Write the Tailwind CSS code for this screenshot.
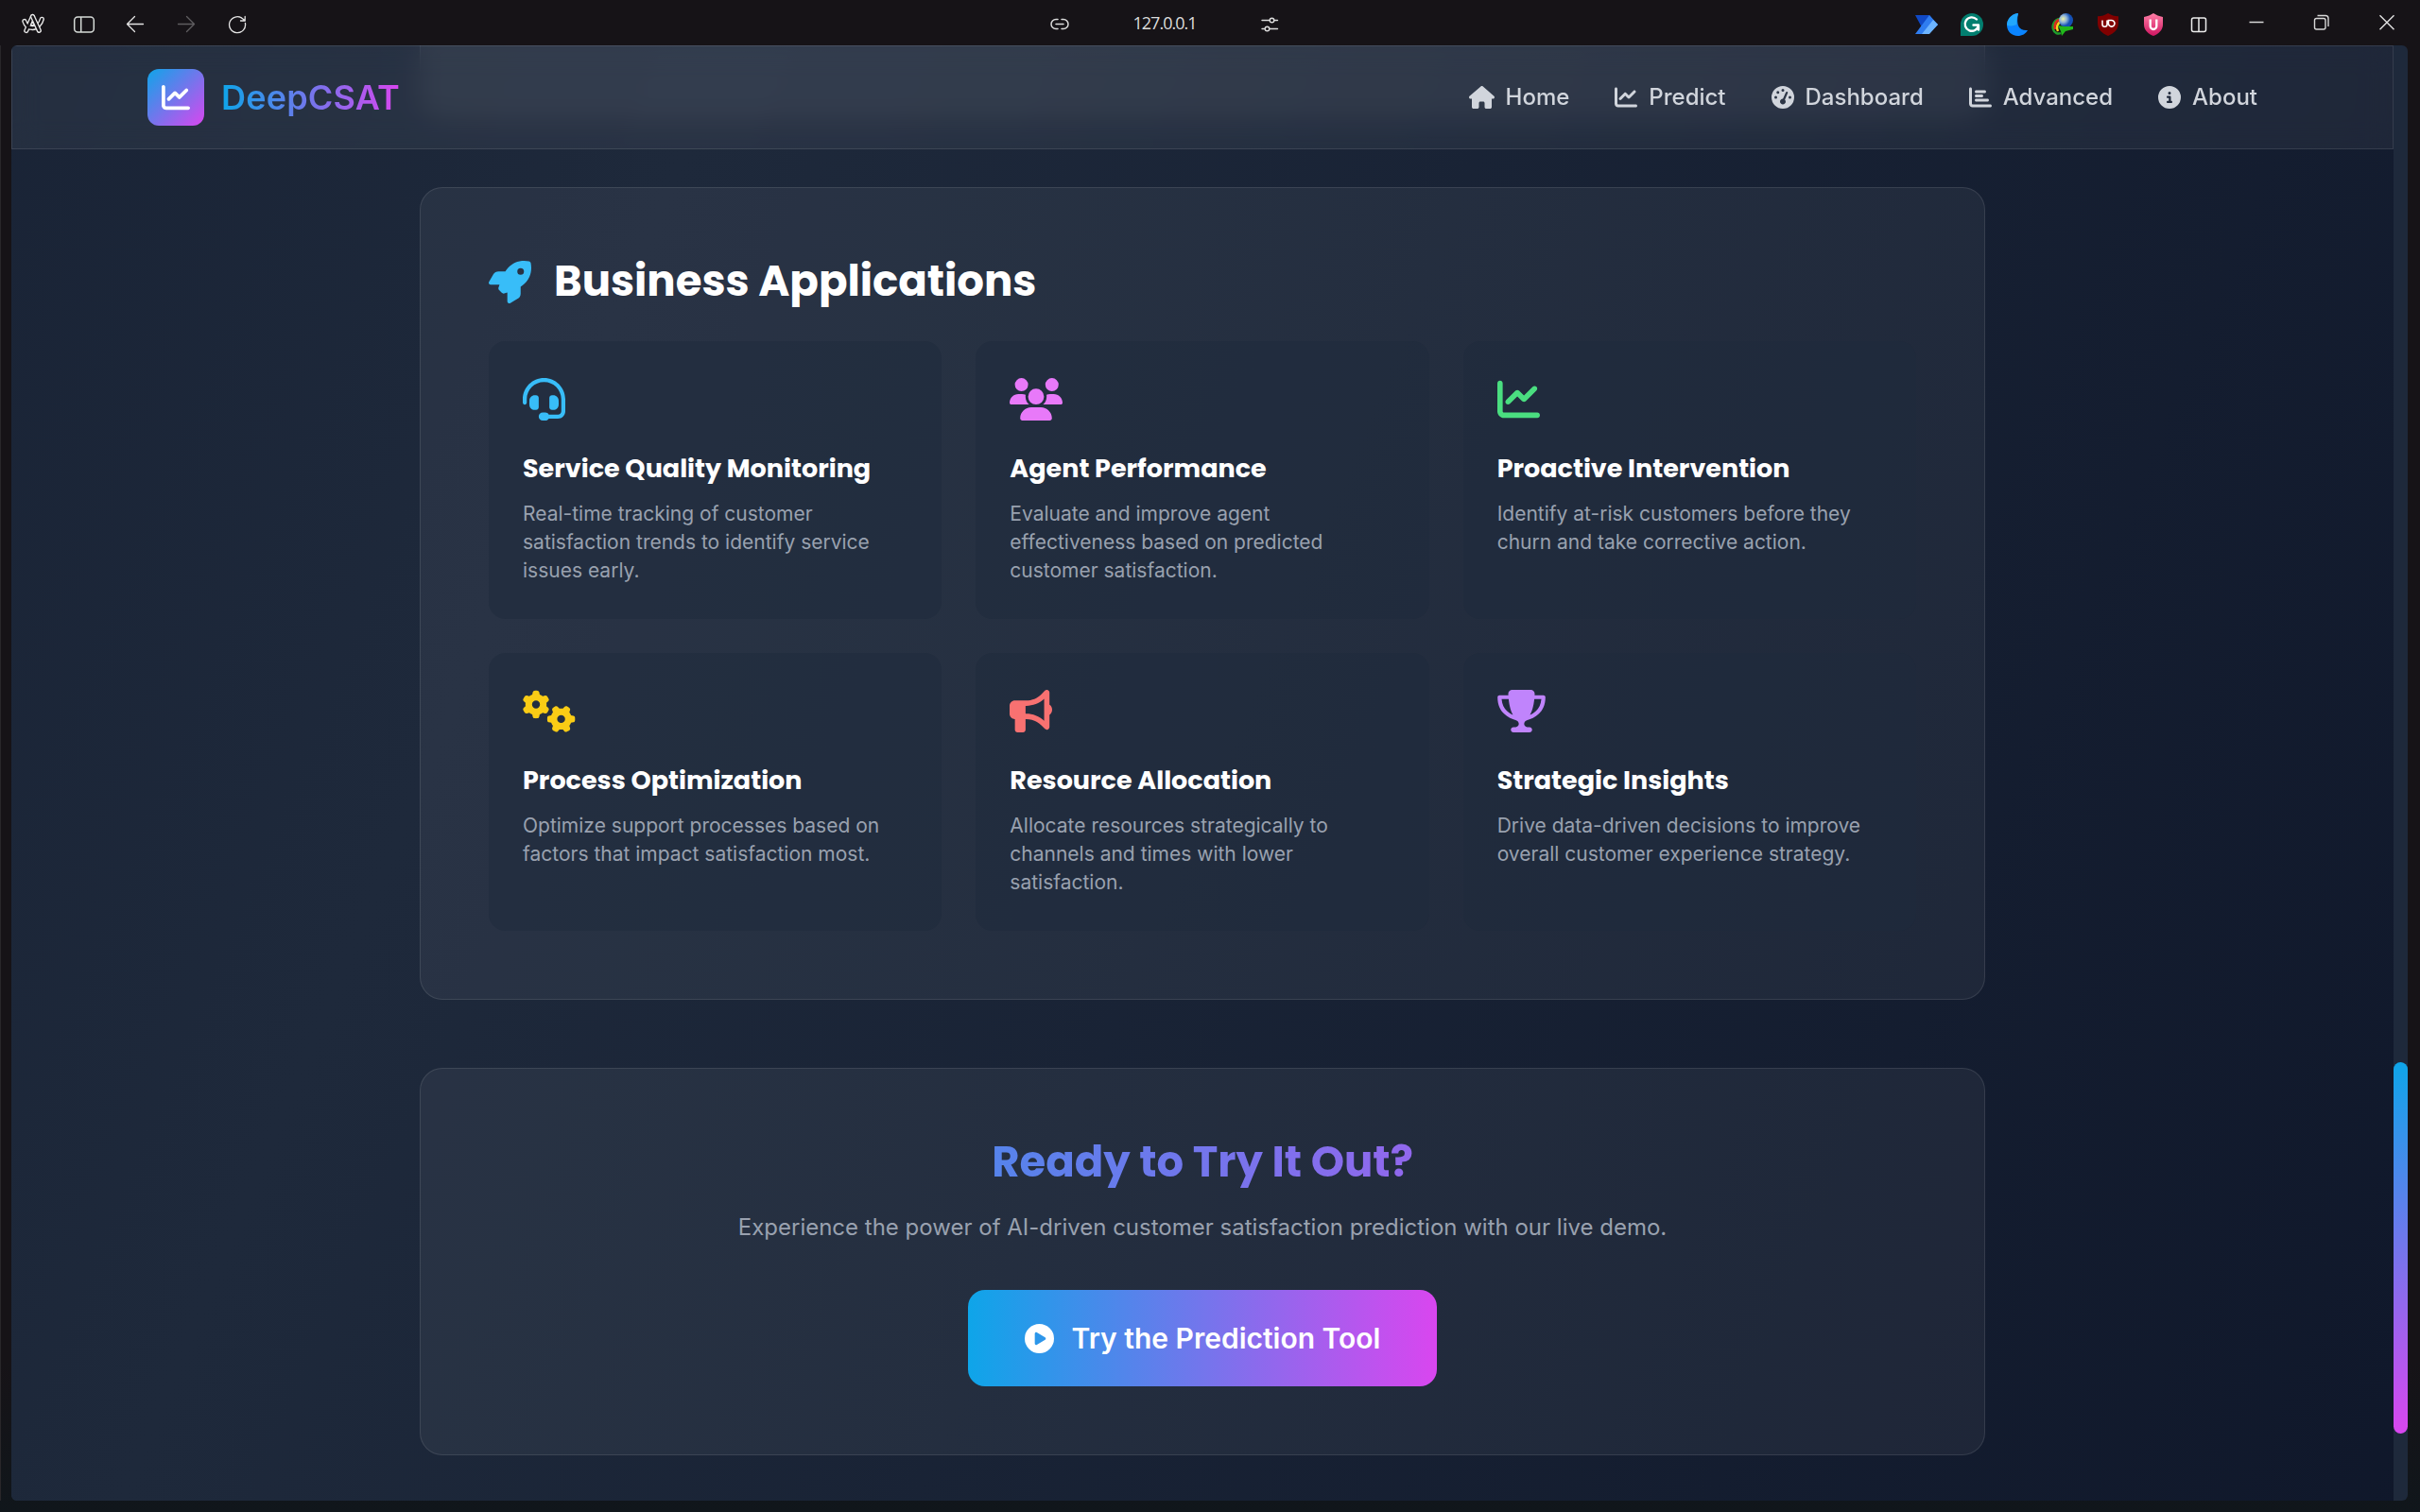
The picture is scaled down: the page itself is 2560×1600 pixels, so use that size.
<!DOCTYPE html>
<html lang="en">
<head>
<meta charset="utf-8">
<title>DeepCSAT</title>
<script src="https://cdn.jsdelivr.net/npm/@tailwindcss/browser@4"></script>
</head>
<body class="flex h-[1600px] w-[2560px] flex-col overflow-hidden bg-linear-to-b from-[#161317] from-90% to-[#10161b] font-[Inter,sans-serif] text-white">

<!-- Icon sprite -->
<svg class="hidden">
  <symbol id="house" viewBox="0 0 576 512"><path d="M575.8 255.5c0 18-15 32.1-32 32.1l-32 0 .7 160.2c0 2.7-.2 5.4-.5 8.1l0 16.2c0 22.1-17.9 40-40 40l-16 0c-1.1 0-2.2 0-3.3-.1c-1.4 .1-2.8 .1-4.2 .1L416 512l-24 0c-22.1 0-40-17.9-40-40l0-24 0-64c0-17.7-14.3-32-32-32l-64 0c-17.7 0-32 14.3-32 32l0 64 0 24c0 22.1-17.9 40-40 40l-24 0-31.9 0c-1.5 0-3-.1-4.5-.2c-1.2 .1-2.4 .2-3.6 .2l-16 0c-22.1 0-40-17.9-40-40l0-112c0-.9 0-1.9 .1-2.8l0-69.7-32 0c-18 0-32-14-32-32.1c0-9 3-17 10-24L266.4 8c7-7 15-8 22-8s15 2 21 7L564.8 231.5c8 7 12 15 11 24z"/></symbol>
  <symbol id="chart-line" viewBox="0 0 512 512"><path d="M64 64c0-17.7-14.3-32-32-32S0 46.3 0 64V400c0 44.2 35.8 80 80 80H480c17.7 0 32-14.3 32-32s-14.3-32-32-32H80c-8.800 0-16-7.200-16-16V64zm406.600 86.600c12.500-12.500 12.500-32.800 0-45.300s-32.800-12.500-45.300 0L320 210.700l-57.400-57.400c-12.500-12.500-32.800-12.500-45.300 0l-112 112c-12.500 12.500-12.500 32.800 0 45.300s32.800 12.500 45.300 0L240 221.300l57.400 57.400c12.500 12.500 32.800 12.500 45.300 0l128-128z"/></symbol>
  <symbol id="gauge" viewBox="0 0 512 512"><path fill-rule="evenodd" d="M0 256a256 256 0 1 1 512 0A256 256 0 1 1 0 256zM288 96a32 32 0 1 0 -64 0 32 32 0 1 0 64 0zM256 416c35.3 0 64-28.7 64-64c0-17.4-6.9-33.1-18.1-44.6L366 161.7c5.3-12.1-.2-26.3-12.3-31.6s-26.3 .2-31.6 12.3L257.9 288c-.6 0-1.3 0-1.9 0c-35.3 0-64 28.7-64 64s28.7 64 64 64zM176 144a32 32 0 1 0 -64 0 32 32 0 1 0 64 0zM96 288a32 32 0 1 0 0-64 32 32 0 1 0 0 64zm352-32a32 32 0 1 0 -64 0 32 32 0 1 0 64 0z"/></symbol>
  <symbol id="chart-bar" viewBox="0 0 512 512"><path d="M32 32c17.7 0 32 14.3 32 32V400c0 8.8 7.2 16 16 16H480c17.7 0 32 14.3 32 32s-14.3 32-32 32H80c-44.2 0-80-35.8-80-80V64C0 46.3 14.3 32 32 32zm96 96c0-17.7 14.3-32 32-32l192 0c17.7 0 32 14.3 32 32s-14.3 32-32 32H160c-17.7 0-32-14.3-32-32zm32 64H288c17.7 0 32 14.3 32 32s-14.3 32-32 32H160c-17.7 0-32-14.3-32-32s14.3-32 32-32zm0 96H416c17.7 0 32 14.3 32 32s-14.3 32-32 32H160c-17.7 0-32-14.3-32-32s14.3-32 32-32z"/></symbol>
  <symbol id="info" viewBox="0 0 512 512"><path fill-rule="evenodd" d="M256 512A256 256 0 1 0 256 0a256 256 0 1 0 0 512zM216 336h24V272H216c-13.3 0-24-10.7-24-24s10.7-24 24-24h48c13.3 0 24 10.7 24 24v88h8c13.3 0 24 10.7 24 24s-10.7 24-24 24H216c-13.3 0-24-10.7-24-24s10.7-24 24-24zm40-208a32 32 0 1 1 0 64 32 32 0 1 1 0-64z"/></symbol>
  <symbol id="rocket" viewBox="0 0 512 512"><path fill-rule="evenodd" d="M156.6 384.9L125.7 354c-8.5-8.5-11.5-20.8-7.7-32.2c3-8.9 7-20.5 11.8-33.8L24 288c-8.6 0-16.6-4.6-20.9-12.1s-4.2-16.7 .2-24.1l52.5-88.5c13-21.9 36.5-35.3 61.9-35.3l82.3 0c2.4-4 4.8-7.7 7.2-11.3C289.1-4.1 411.1-8.1 483.9 5.3c11.6 2.1 20.6 11.2 22.8 22.8c13.4 72.9 9.3 194.8-111.4 276.7c-3.5 2.4-7.3 4.8-11.3 7.2v82.3c0 25.4-13.4 49-35.3 61.9l-88.5 52.5c-7.4 4.4-16.6 4.5-24.1 .2s-12.1-12.2-12.1-20.9V380.8c-14.1 4.9-26.4 8.9-35.7 11.9c-11.2 3.6-23.4 .5-31.8-7.8zM384 168a40 40 0 1 0 0-80 40 40 0 1 0 0 80z"/></symbol>
  <symbol id="headset" viewBox="0 0 512 512"><path d="M256 48C141.1 48 48 141.1 48 256v40c0 13.3-10.7 24-24 24s-24-10.7-24-24V256C0 114.6 114.6 0 256 0S512 114.6 512 256V400.1c0 48.6-39.4 88-88.1 88L313.6 488c-8.3 14.3-23.8 24-41.6 24H240c-26.5 0-48-21.5-48-48s21.5-48 48-48h32c17.8 0 33.3 9.7 41.6 24l110.4 .1c22.1 0 40-17.9 40-40V256c0-114.9-93.1-208-208-208zM144 208h16c17.7 0 32 14.3 32 32V352c0 17.7-14.3 32-32 32H144c-35.3 0-64-28.7-64-64V272c0-35.3 28.7-64 64-64zm224 0c35.3 0 64 28.7 64 64v48c0 35.3-28.7 64-64 64H352c-17.7 0-32-14.3-32-32V240c0-17.7 14.3-32 32-32h16z"/></symbol>
  <symbol id="users" viewBox="0 0 640 512"><path d="M144 0a80 80 0 1 1 0 160A80 80 0 1 1 144 0zM512 0a80 80 0 1 1 0 160A80 80 0 1 1 512 0zM0 298.7C0 239.8 47.8 192 106.7 192h42.7c15.9 0 31 3.5 44.6 9.7c-1.3 7.2-1.9 14.7-1.9 22.3c0 38.2 16.8 72.5 43.3 96c-.2 0-.4 0-.7 0H21.3C9.6 320 0 310.4 0 298.7zM405.3 320c-.2 0-.4 0-.7 0c26.6-23.5 43.3-57.8 43.3-96c0-7.6-.7-15-1.9-22.3c13.6-6.3 28.7-9.7 44.6-9.7h42.7C592.2 192 640 239.8 640 298.7c0 11.8-9.6 21.3-21.3 21.3H405.3zM224 224a96 96 0 1 1 192 0 96 96 0 1 1 -192 0zM128 485.3C128 411.7 187.7 352 261.3 352H378.7C452.3 352 512 411.7 512 485.3c0 14.7-11.9 26.7-26.7 26.7H154.7c-14.7 0-26.7-11.9-26.7-26.7z"/></symbol>
  <symbol id="cogs" viewBox="0 0 640 512"><path fill-rule="evenodd" d="M308.5 135.3c7.1-6.3 9.9-16.2 6.2-25c-2.3-5.3-4.8-10.5-7.6-15.5L304 89.4c-3-5-6.3-9.9-9.8-14.6c-5.7-7.6-15.7-10.1-24.7-7.1l-28.2 9.3c-10.7-8.8-23-16-36.2-20.9L199 27.1c-1.9-9.3-9.1-16.7-18.5-17.8C173.9 8.4 167.2 8 160.4 8h-.7c-6.8 0-13.5 .4-20.1 1.2c-9.4 1.1-16.6 8.6-18.5 17.8L115 56.1c-13.3 5-25.5 12.1-36.2 20.9L50.5 67.8c-9-3-19-.5-24.7 7.1c-3.500 4.700-6.800 9.600-9.900 14.600l-3 5.300c-2.800 5-5.300 10.200-7.600 15.600c-3.700 8.700-.9 18.600 6.200 25l22.200 19.800C32.600 161.900 32 168.900 32 176s.6 14.100 1.700 20.900L11.500 216.700c-7.100 6.300-9.900 16.200-6.200 25c2.300 5.300 4.800 10.500 7.600 15.600l3 5.200c3 5.100 6.300 9.900 9.900 14.600c5.700 7.600 15.700 10.100 24.700 7.100l28.200-9.300c10.700 8.800 23 16 36.200 20.900l6.100 29.100c1.900 9.300 9.100 16.700 18.500 17.800c6.700 .8 13.500 1.200 20.400 1.200s13.700-.4 20.400-1.200c9.400-1.100 16.600-8.600 18.500-17.800l6.100-29.100c13.300-5 25.500-12.100 36.200-20.900l28.200 9.300c9 3 19 .5 24.700-7.100c3.500-4.700 6.800-9.500 9.800-14.600l3.100-5.400c2.800-5 5.300-10.200 7.600-15.500c3.700-8.700 .9-18.600-6.200-25l-22.200-19.800c1.100-6.800 1.700-13.800 1.700-20.900s-.6-14.100-1.700-20.900l22.200-19.800zM112 176a48 48 0 1 1 96 0 48 48 0 1 1 -96 0zM504.700 500.500c6.300 7.100 16.200 9.900 25 6.200c5.300-2.300 10.500-4.800 15.500-7.600l5.400-3.100c5-3 9.900-6.300 14.600-9.800c7.600-5.700 10.100-15.700 7.100-24.700l-9.300-28.200c8.800-10.700 16-23 20.900-36.200l29.100-6.100c9.300-1.900 16.700-9.100 17.800-18.500c.8-6.700 1.200-13.500 1.200-20.400s-.4-13.700-1.200-20.400c-1.100-9.400-8.600-16.600-17.800-18.500L583.900 307c-5-13.300-12.100-25.500-20.900-36.200l9.300-28.200c3-9 .5-19-7.100-24.700c-4.700-3.500-9.600-6.800-14.600-9.900l-5.300-3c-5-2.800-10.200-5.300-15.600-7.600c-8.700-3.700-18.600-.9-25 6.200l-19.800 22.200c-6.800-1.100-13.800-1.700-20.900-1.700s-14.100 .6-20.900 1.700l-19.800-22.200c-6.300-7.100-16.200-9.900-25-6.200c-5.300 2.300-10.500 4.800-15.600 7.600l-5.200 3c-5.100 3-9.900 6.300-14.600 9.900c-7.600 5.700-10.100 15.700-7.100 24.700l9.300 28.200c-8.800 10.700-16 23-20.900 36.200L315.100 313c-9.300 1.900-16.700 9.100-17.800 18.500c-.8 6.700-1.200 13.500-1.200 20.400s.4 13.700 1.200 20.400c1.100 9.400 8.600 16.600 17.800 18.500l29.100 6.100c5 13.300 12.100 25.500 20.900 36.200l-9.300 28.200c-3 9-.5 19 7.100 24.700c4.700 3.500 9.500 6.800 14.600 9.800l5.400 3.100c5 2.800 10.200 5.300 15.500 7.600c8.700 3.700 18.600 .9 25-6.200l19.800-22.200c6.800 1.100 13.800 1.700 20.900 1.700s14.100-.6 20.900-1.700l19.800 22.200zM464 304a48 48 0 1 1 0 96 48 48 0 1 1 0-96z"/></symbol>
  <symbol id="bullhorn" viewBox="0 0 512 512"><path fill-rule="evenodd" d="M480 32c0-12.9-7.800-24.600-19.800-29.600s-25.700-2.200-34.900 6.900L381.700 53c-48 48-113.100 75-181 75H192 160 64c-35.300 0-64 28.700-64 64v96c0 35.300 28.700 64 64 64l0 128c0 17.700 14.300 32 32 32h64c17.700 0 32-14.300 32-32V352l8.700 0c67.900 0 133 27 181 75l43.600 43.600c9.200 9.200 22.900 11.900 34.900 6.900s19.800-16.600 19.800-29.600V300.400c18.600-8.800 32-32.500 32-60.400s-13.400-51.600-32-60.400V32zm-64 76.700V240 371.300C357.200 317.800 280.500 288 200.700 288H192V192h8.700c79.800 0 156.500-29.800 215.300-83.300z"/></symbol>
  <symbol id="trophy" viewBox="0 0 576 512"><path fill-rule="evenodd" d="M400 0H176c-26.500 0-48.100 21.800-47.100 48.200c.2 5.300 .4 10.600 .7 15.800H24C10.700 64 0 74.700 0 88c0 92.600 33.500 157 78.500 200.700c44.300 43.100 98.300 64.800 138.100 75.800c23.400 6.500 39.400 26 39.400 45.600c0 20.900-17 37.900-37.900 37.900H192c-17.700 0-32 14.300-32 32s14.300 32 32 32H384c17.700 0 32-14.300 32-32s-14.300-32-32-32H357.900C337 448 320 431 320 410.100c0-19.600 15.900-39.200 39.400-45.600c39.900-11 93.900-32.700 138.200-75.800C542.500 245 576 180.600 576 88c0-13.300-10.700-24-24-24H446.400c.3-5.200 .5-10.400 .7-15.800C448.100 21.800 426.500 0 400 0zM48.900 112h84.400c9.100 90.100 29.200 150.300 51.900 190.600c-24.900-11-50.800-26.500-73.200-48.300c-32-31.100-58-76-63-142.300zM464.100 254.300c-22.400 21.800-48.300 37.300-73.200 48.300c22.700-40.300 42.800-100.500 51.900-190.600h84.400c-5.100 66.300-31.100 111.200-63 142.300z"/></symbol>
  <symbol id="play" viewBox="0 0 512 512"><path fill-rule="evenodd" d="M0 256a256 256 0 1 1 512 0A256 256 0 1 1 0 256zM188.300 147.100c-7.600 4.200-12.300 12.300-12.300 20.900V344c0 8.700 4.700 16.700 12.300 20.900s16.800 4.100 24.300-.5l144-88c7.100-4.400 11.500-12.100 11.500-20.900s-4.400-16.500-11.500-20.900l-144-88c-7.400-4.500-16.700-4.700-24.300-.5z"/></symbol>
</svg>

<!-- Browser title bar -->
<div class="flex h-12 shrink-0 items-center pl-2 pt-[3px]">
  <div class="flex w-[1101px] text-[#e4e4e4]">
    <div class="flex w-[54px] justify-center"><svg class="size-6" viewBox="0 0 24 24" fill="none" stroke-linejoin="round" stroke-linecap="round"><path stroke="#e8e8e8" stroke-width="5.200" d="M4.800 18.500L11.500 3.500M2.900 8.500C4.500 13.500 7.500 15.600 11.500 15.600c4.500 0 8.500-4 9.800-9.300"/><path stroke="#161317" stroke-width="2.500" d="M4.800 18.500L11.500 3.500M2.900 8.500C4.500 13.500 7.500 15.600 11.500 15.600c4.500 0 8.500-4 9.800-9.300"/><path stroke="#e8e8e8" stroke-width="5.200" d="M11.500 3.500L18.300 18.300"/><path stroke="#161317" stroke-width="2.500" d="M11.500 3.500L18.300 18.300"/><path fill="#161317" stroke="#e8e8e8" stroke-width="1.200" d="M11.300 8.500l1.900 4.200-3.600-.3z"/></svg></div>
    <div class="flex w-[54px] justify-center"><svg class="size-6" viewBox="0 0 24 24" fill="none" stroke="#d6dbd8" stroke-width="1.500"><rect x="1.700" y="4" width="20.600" height="16" rx="3.500"/><path d="M8.700 4v16"/></svg></div>
    <div class="flex w-[54px] justify-center"><svg class="size-6" viewBox="0 0 24 24" fill="none" stroke="currentColor" stroke-width="1.300" stroke-linecap="round" stroke-linejoin="round"><path d="M20.500 11.500H3.500M11.500 3.500l-8 8 8 8"/></svg></div>
    <div class="flex w-[54px] justify-center text-[#5f5d60]"><svg class="size-6" viewBox="0 0 24 24" fill="none" stroke="currentColor" stroke-width="1.300" stroke-linecap="round" stroke-linejoin="round"><path d="M3.500 11.500h17M12.500 3.500l8 8-8 8"/></svg></div>
    <div class="flex w-[54px] justify-center"><svg class="size-6" viewBox="0 0 24 24" fill="none" stroke="currentColor" stroke-width="1.300" stroke-linecap="round" stroke-linejoin="round"><path d="M20.400 10.500a8.500 8.500 0 1 1-3.100-5l2.900 2.500M20.200 3.500V8h-4.700"/></svg></div>
  </div>
  <div class="flex w-[246px] items-center justify-between text-[#dcdcdc]">
    <svg class="size-6" viewBox="0 0 24 24" fill="none" stroke="currentColor" stroke-width="1.500" stroke-linecap="round"><path d="M10 6.500H8a5 5 0 0 0 0 10h2M14 6.500h2a5 5 0 0 1 0 10h-2M8 11.500h8"/></svg>
    <span class="mb-[3px] font-['Segoe_UI','Open_Sans',sans-serif] text-[18px] leading-6 tracking-[-1px]">127.0.0.1</span>
    <svg class="size-6" viewBox="0 0 24 24" fill="none" stroke="currentColor" stroke-width="1.400" stroke-linecap="round"><path d="M4 7.500h8M17 7.500h3.500M4 16.500h3M12 16.500h8.500"/><circle cx="14.500" cy="7.500" r="2.300"/><circle cx="9.500" cy="16.500" r="2.300"/></svg>
  </div>
  <div class="ml-auto flex items-center pr-[1px]">
    <div class="flex w-12 justify-center"><svg class="size-6" viewBox="0 0 24 24"><path fill="#1049c6" d="M0 2h15l4 5-12 8z"/><path fill="#2f7df0" d="M15 2 0 22h14L24 12z"/><path fill="#6db4ff" d="M19 7l5 5-9 10H7z"/></svg></div>
    <div class="flex w-12 justify-center"><svg class="size-6" viewBox="0 0 24 24"><path fill="#027e6f" d="M12 0a12 12 0 1 1 0 24H0V12A12 12 0 0 1 12 0z"/><path fill="none" stroke="#fff" stroke-width="2.400" stroke-linecap="round" stroke-linejoin="round" d="M17 6.500A7.200 7.200 0 1 0 19 12.500h-5.500M19 12.500v5"/></svg></div>
    <div class="flex w-12 justify-center"><svg class="size-6" viewBox="0 0 24 24"><path fill="#0a84ff" d="M13 0C5 1 1 7 1 12.500 1 19 6 24 12.500 24c4.500 0 8.500-2.200 10.500-6-8 1-13-4-10-18z"/><path fill="#22a7fb" d="M13 0C5 1 1 7 1 12.500c3 1.500 7 1 10.500-.5C11 9 11.500 5 13 0z"/></svg></div>
    <div class="flex w-12 justify-center"><svg class="size-6" viewBox="0 0 24 24"><defs><radialGradient id="globe" cx=".3" cy=".4"><stop offset="0" stop-color="#eff2a0"/><stop offset=".5" stop-color="#8fb4d8"/><stop offset="1" stop-color="#1450b4"/></radialGradient></defs><path fill="none" stroke="#1f9d2c" stroke-width="2.500" d="M9 6C3 7 .800 12 2 17c1 4 5 5.500 8 4"/><path fill="none" stroke="#e02a1c" stroke-width="2.500" d="M9 7C4 8 3 13 4 17"/><path fill="none" stroke="#ffd21f" stroke-width="2.500" d="M11 9c-5 1-6 6-4 10"/><circle cx="15.500" cy="7.500" r="7.500" fill="url(#globe)"/><path fill="#22b81c" d="M7 13l7 1 9 0 0 3-8 2-4 5-1-5z"/></svg></div>
    <div class="flex w-12 justify-center"><svg class="size-6" viewBox="0 0 24 24"><path fill="#800000" d="M12 0c3 2 7 3.300 11 3.300V10c0 7-4 11-11 14C5 21 1 17 1 10V3.300C5 3.300 9 2 12 0z"/><path fill="none" stroke="#fff" stroke-width="1.600" d="M6 7.500v4.200a2.500 2.500 0 0 0 5 0V7.500M12.400 7.500h3a3.300 3.300 0 1 1-3 3.300z"/></svg></div>
    <div class="flex w-12 justify-center"><svg class="size-6" viewBox="0 0 24 24"><defs><linearGradient id="shield" x2="0" y2="1"><stop stop-color="#ff7fa6"/><stop offset="1" stop-color="#cf1561"/></linearGradient></defs><path fill="url(#shield)" d="M12 0c3 2 6 3 10 4v8c0 6-5 10-10 12C7 22 2 18 2 12V4c4-1 7-2 10-4z"/><path fill="none" stroke="#fff" stroke-width="2.300" d="M8.700 6.500v7.200a3.300 3.300 0 0 0 6.600 0V6.500"/></svg></div>
    <div class="flex w-12 justify-center"><svg class="size-6" viewBox="0 0 24 24" fill="none" stroke="#ececec" stroke-width="1.500"><rect x="4.500" y="5" width="15" height="14.500" rx="2"/><path d="M12 5v14.500"/></svg></div>
    <div class="ml-0.5 flex w-[69px] justify-center"><svg class="size-6" viewBox="0 0 24 24" stroke="#d8d8d8" stroke-width="1.500"><path d="M4.500 9.500h15"/></svg></div>
    <div class="flex w-[69px] justify-center"><svg class="size-6" viewBox="0 0 24 24" fill="none" stroke="#d8d8d8" stroke-width="1.400"><rect x="4.500" y="5.500" width="11.500" height="11.500" rx="2"/><path d="M7.500 2.500H16a3 3 0 0 1 3 3v8.500"/></svg></div>
    <div class="flex w-[69px] justify-center"><svg class="size-6" viewBox="0 0 24 24" stroke="#e4e4e4" stroke-width="1.400"><path d="M4.500 2.200l15 15M19.500 2.200l-15 15"/></svg></div>
  </div>
</div>

<!-- Browser viewport -->
<div class="flex h-[1540px] shrink-0 border-l border-[#29272a] pl-[11px]">
  <div class="flex w-[2535px] overflow-hidden rounded-md bg-[#1e293b]">
    <div class="relative flex w-[2520px] flex-col bg-linear-to-br/srgb from-[#0f172a] via-[#1e293b] to-[#0f172a] bg-[length:2520px_6035px] bg-[position:0_-4217px]">

      <header class="absolute inset-x-0 top-0 z-10 flex h-[110px] items-center justify-between border border-white/10 bg-white/5 px-[143px] backdrop-blur-[15px]">
        <div class="flex items-center gap-[18px]">
          <div class="flex size-[60px] items-center justify-center rounded-xl bg-linear-to-br/srgb from-[#0ea5e9] to-[#d946ef]">
            <svg class="size-[30px] fill-white"><use href="#chart-line"/></svg>
          </div>
          <span class="bg-linear-to-r/srgb from-[#0ea5e9] to-[#d946ef] bg-clip-text text-[36px] leading-[48px] font-semibold tracking-[0.2px] text-transparent">DeepCSAT</span>
        </div>
        <nav class="flex gap-12 text-2xl leading-9 font-medium text-gray-300">
          <a class="flex items-center gap-3"><svg class="h-6 w-[27px] fill-current"><use href="#house"/></svg>Home</a>
          <a class="flex items-center gap-3"><svg class="size-6 fill-current"><use href="#chart-line"/></svg>Predict</a>
          <a class="flex items-center gap-3"><svg class="size-6 fill-current"><use href="#gauge"/></svg>Dashboard</a>
          <a class="flex items-center gap-3"><svg class="size-6 fill-current"><use href="#chart-bar"/></svg>Advanced</a>
          <a class="flex items-center gap-3"><svg class="size-6 fill-current"><use href="#info"/></svg>About</a>
        </nav>
      </header>

      <main class="mx-auto flex w-[1656px] flex-col gap-[72px]">
        <!-- Tail of the preceding section, scrolled under the header -->
        <section class="h-[78px] rounded-b-3xl border border-t-0 border-white/10 bg-white/5"></section>

        <section class="rounded-3xl border border-white/10 bg-white/5 p-[72px]">
          <h2 class="mb-9 flex items-center gap-6 font-[Poppins,Inter,sans-serif] text-[45px] leading-[54px] font-bold"><svg class="size-[45px] fill-[#38bdf8]"><use href="#rocket"/></svg>Business Applications</h2>
          <div class="grid grid-cols-3 gap-9">
            <article class="h-[294px] rounded-[18px] bg-[#1e293b]/50 p-9">
              <svg class="mt-[3px] mb-[30px] h-[45px] w-[45px] fill-[#38bdf8]"><use href="#headset"/></svg>
              <h3 class="mb-3 font-[Poppins,Inter,sans-serif] text-[27px] leading-[42px] font-bold whitespace-nowrap">Service Quality Monitoring</h3>
              <p class="text-[21px] leading-[30px] text-gray-400">Real-time tracking of customer satisfaction trends to identify service issues early.</p>
            </article>
            <article class="h-[294px] rounded-[18px] bg-[#1e293b]/50 p-9">
              <svg class="mt-[3px] mb-[30px] h-[45px] w-[56px] fill-[#e879f9]"><use href="#users"/></svg>
              <h3 class="mb-3 font-[Poppins,Inter,sans-serif] text-[27px] leading-[42px] font-bold whitespace-nowrap">Agent Performance</h3>
              <p class="text-[21px] leading-[30px] text-gray-400">Evaluate and improve agent effectiveness based on predicted customer satisfaction.</p>
            </article>
            <article class="h-[294px] rounded-[18px] bg-[#1e293b]/50 p-9">
              <svg class="mt-[3px] mb-[30px] h-[45px] w-[45px] fill-[#4ade80]"><use href="#chart-line"/></svg>
              <h3 class="mb-3 font-[Poppins,Inter,sans-serif] text-[27px] leading-[42px] font-bold whitespace-nowrap">Proactive Intervention</h3>
              <p class="text-[21px] leading-[30px] text-gray-400">Identify at-risk customers before they churn and take corrective action.</p>
            </article>
            <article class="h-[294px] rounded-[18px] bg-[#1e293b]/50 p-9">
              <svg class="mt-[3px] mb-[30px] h-[45px] w-[56px] fill-[#facc15]"><use href="#cogs"/></svg>
              <h3 class="mb-3 font-[Poppins,Inter,sans-serif] text-[27px] leading-[42px] font-bold whitespace-nowrap">Process Optimization</h3>
              <p class="text-[21px] leading-[30px] text-gray-400">Optimize support processes based on factors that impact satisfaction most.</p>
            </article>
            <article class="h-[294px] rounded-[18px] bg-[#1e293b]/50 p-9">
              <svg class="mt-[3px] mb-[30px] h-[45px] w-[45px] fill-[#f87171]"><use href="#bullhorn"/></svg>
              <h3 class="mb-3 font-[Poppins,Inter,sans-serif] text-[27px] leading-[42px] font-bold whitespace-nowrap">Resource Allocation</h3>
              <p class="text-[21px] leading-[30px] text-gray-400">Allocate resources strategically to channels and times with lower satisfaction.</p>
            </article>
            <article class="h-[294px] rounded-[18px] bg-[#1e293b]/50 p-9">
              <svg class="mt-[3px] mb-[30px] h-[45px] w-[51px] fill-[#c084fc]"><use href="#trophy"/></svg>
              <h3 class="mb-3 font-[Poppins,Inter,sans-serif] text-[27px] leading-[42px] font-bold whitespace-nowrap">Strategic Insights</h3>
              <p class="text-[21px] leading-[30px] text-gray-400">Drive data-driven decisions to improve overall customer experience strategy.</p>
            </article>
          </div>
        </section>

        <section class="flex flex-col items-center rounded-3xl border border-white/10 bg-white/5 p-[72px] text-center">
          <h2 class="mb-6 w-full bg-linear-to-r/srgb from-[#0ea5e9] to-[#d946ef] bg-clip-text font-[Poppins,Inter,sans-serif] text-[45px] leading-[54px] font-bold text-transparent">Ready to Try It Out?</h2>
          <p class="mb-12 text-2xl leading-9 text-gray-400">Experience the power of AI-driven customer satisfaction prediction with our live demo.</p>
          <a class="flex h-[102px] w-[496px] items-center justify-center gap-[19px] rounded-[18px] bg-linear-to-r/srgb from-[#0ea5e9] to-[#d946ef] text-[30px] leading-[42px] font-semibold"><svg class="size-[31px] fill-white"><use href="#play"/></svg>Try the Prediction Tool</a>
        </section>
      </main>
    </div>

    <!-- Scrollbar -->
    <div class="w-[15px] pt-[1076px]">
      <div class="h-[393px] rounded-full bg-linear-to-b/srgb from-[#0ea5e9] to-[#d946ef]"></div>
    </div>
  </div>
</div>
</body>
</html>
